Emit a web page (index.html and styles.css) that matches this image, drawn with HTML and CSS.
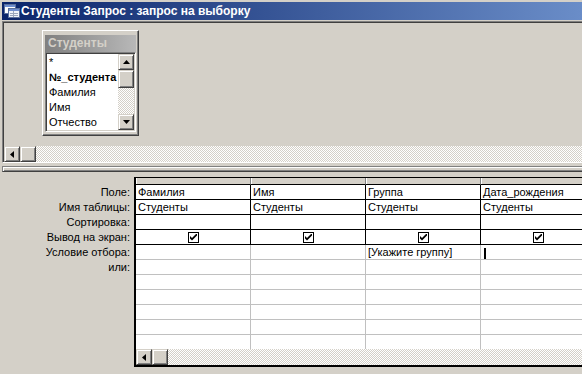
FILE: index.html
```html
<!DOCTYPE html>
<html lang="ru">
<head>
    <meta charset="UTF-8">
    <title>Студенты Запрос : запрос на выборку</title>
    <link rel="stylesheet" href="styles.css">
</head>
<body>
    <div class="window">
        <div class="titlebar">
            <svg class="title-icon" width="16" height="16" viewBox="0 0 16 16">
                <rect x="0.5" y="1.5" width="11" height="9" fill="#fff" stroke="#5a6f9c"/>
                <rect x="1" y="2" width="10" height="2" fill="#6f8fd0"/>
                <rect x="4.5" y="5.5" width="11" height="9" fill="#eef3fb" stroke="#5a6f9c"/>
                <rect x="5" y="6" width="10" height="2" fill="#6f8fd0"/>
                <path d="M6 10.5h8M6 12.5h8M9.5 8v6" stroke="#9aa6bd" stroke-width="1"/>
            </svg>
            <span class="title-text">Студенты Запрос : запрос на выборку</span>
        </div>

        <!-- upper pane: table field lists -->
        <div class="tables-pane">
            <div class="tables-area">
                <div class="field-list">
                    <div class="field-list-title">Студенты</div>
                    <div class="field-list-body">
                        <ul class="fields">
                            <li class="asterisk">*</li>
                            <li class="key">№_студента</li>
                            <li>Фамилия</li>
                            <li>Имя</li>
                            <li>Отчество</li>
                        </ul>
                        <div class="vscroll">
                            <div class="sb-btn">
                                <svg width="7" height="4" viewBox="0 0 7 4"><path d="M3.5 0L7 4H0z"/></svg>
                            </div>
                            <div class="sb-thumb"></div>
                            <div class="sb-track"></div>
                            <div class="sb-btn">
                                <svg width="7" height="4" viewBox="0 0 7 4"><path d="M0 0H7L3.5 4z"/></svg>
                            </div>
                        </div>
                    </div>
                </div>
            </div>
            <div class="hscroll">
                <div class="sb-btn">
                    <svg width="4" height="7" viewBox="0 0 4 7"><path d="M4 0V7L0 3.5z"/></svg>
                </div>
                <div class="sb-thumb"></div>
                <div class="sb-track"></div>
            </div>
        </div>

        <div class="splitter"></div>

        <!-- lower pane: design grid -->
        <div class="design-pane">
            <div class="row-labels">
                <div class="row-label">Поле:</div>
                <div class="row-label">Имя таблицы:</div>
                <div class="row-label">Сортировка:</div>
                <div class="row-label">Вывод на экран:</div>
                <div class="row-label">Условие отбора:</div>
                <div class="row-label">или:</div>
            </div>
            <div class="grid">
                <table class="qbe">
                    <tr class="selector">
                        <td></td><td></td><td></td><td></td>
                    </tr>
                    <tr class="strong">
                        <td>Фамилия</td><td>Имя</td><td>Группа</td><td>Дата_рождения</td>
                    </tr>
                    <tr class="strong">
                        <td>Студенты</td><td>Студенты</td><td>Студенты</td><td>Студенты</td>
                    </tr>
                    <tr class="strong">
                        <td></td><td></td><td></td><td></td>
                    </tr>
                    <tr class="strong">
                        <td class="center"><span class="check"><svg width="7" height="7" viewBox="0 0 7 7"><path d="M0 2L2 4L7 -1V1.5L2 6.5L0 4.5z"/></svg></span></td>
                        <td class="center"><span class="check"><svg width="7" height="7" viewBox="0 0 7 7"><path d="M0 2L2 4L7 -1V1.5L2 6.5L0 4.5z"/></svg></span></td>
                        <td class="center"><span class="check"><svg width="7" height="7" viewBox="0 0 7 7"><path d="M0 2L2 4L7 -1V1.5L2 6.5L0 4.5z"/></svg></span></td>
                        <td class="center"><span class="check"><svg width="7" height="7" viewBox="0 0 7 7"><path d="M0 2L2 4L7 -1V1.5L2 6.5L0 4.5z"/></svg></span></td>
                    </tr>
                    <tr>
                        <td></td><td></td><td>[Укажите группу]</td><td><span class="caret"></span></td>
                    </tr>
                    <tr><td></td><td></td><td></td><td></td></tr>
                    <tr><td></td><td></td><td></td><td></td></tr>
                    <tr><td></td><td></td><td></td><td></td></tr>
                    <tr><td></td><td></td><td></td><td></td></tr>
                    <tr><td></td><td></td><td></td><td></td></tr>
                    <tr class="last"><td></td><td></td><td></td><td></td></tr>
                </table>
                <div class="hscroll">
                    <div class="sb-btn">
                        <svg width="4" height="7" viewBox="0 0 4 7"><path d="M4 0V7L0 3.5z"/></svg>
                    </div>
                    <div class="sb-thumb"></div>
                    <div class="sb-track"></div>
                </div>
            </div>
        </div>
    </div>
</body>
</html>
```

FILE: styles.css
```css
body {
    margin: 0;
    background-color: #d4d0c8;
    font-family: "Liberation Sans", Arial, sans-serif;
    font-size: 11px;
    color: #000;
    overflow: hidden;
}
.window {
    width: 582px;
    height: 374px;
    padding: 2px 0 0 2px;
    box-sizing: border-box;
    overflow: hidden;
}

/* title bar */
.titlebar {
    display: flex;
    align-items: center;
    height: 18px;
    background: linear-gradient(to right, #0a246a, #6a8dc8);
    color: #fff;
}
.title-icon {
    margin: 0 1px 0 2px;
    flex-shrink: 0;
}
.title-text {
    font-weight: bold;
    font-size: 12px;
    white-space: nowrap;
}

/* upper pane */
.tables-pane {
    margin-top: 1px;
    border-top: 1px solid #808080;
    border-left: 1px solid #808080;
    border-bottom: 1px solid #fff;
    padding: 1px 0 0 1px;
    box-shadow: inset 1px 1px #404040;
}
.tables-area {
    height: 123px;
    overflow: hidden;
}
.field-list {
    width: 91px;
    margin: 7px 0 0 38px;
    padding: 4px 2px 3px 2px;
    border: 1px solid;
    border-color: #fff #404040 #404040 #fff;
    box-shadow: inset -1px -1px #808080;
}
.field-list-title {
    height: 17px;
    line-height: 17px;
    padding-left: 3px;
    background: linear-gradient(to right, #808080, #b8b8b8);
    color: #d4d0c8;
    font-weight: bold;
    font-size: 12px;
    white-space: nowrap;
    overflow: hidden;
}
.field-list-body {
    display: flex;
    height: 76px;
    padding: 1px;
    border: 1px solid;
    border-color: #808080 #fff #fff #808080;
    box-shadow: inset 1px 1px #404040, inset -1px -1px #d4d0c8;
    background-color: #fff;
}
.fields {
    list-style: none;
    margin: 0;
    padding: 1px 0 0 2px;
    width: 69px;
    overflow: hidden;
    white-space: nowrap;
}
.fields li {
    height: 15px;
    line-height: 15px;
}
.fields .key {
    font-weight: bold;
}
.vscroll {
    display: flex;
    flex-direction: column;
    width: 16px;
    flex-shrink: 0;
}
.vscroll .sb-thumb {
    height: 18px;
}

/* scrollbars */
.hscroll {
    display: flex;
    height: 16px;
}
.sb-btn,
.sb-thumb {
    width: 16px;
    height: 16px;
    box-sizing: border-box;
    flex-shrink: 0;
    background-color: #d4d0c8;
    border: 1px solid;
    border-color: #d4d0c8 #404040 #404040 #d4d0c8;
    box-shadow: inset 1px 1px #fff, inset -1px -1px #808080;
}
.sb-btn {
    display: flex;
    align-items: center;
    justify-content: center;
}
.sb-btn svg {
    display: block;
    fill: #000;
}
.sb-track {
    flex: 1;
    background-image: repeating-conic-gradient(#fff 0 25%, #d4d0c8 0 50%);
    background-size: 2px 2px;
}

/* splitter */
.splitter {
    margin-top: 3px;
    height: 4px;
    border-top: 1px solid #808080;
    border-bottom: 1px solid #404040;
    border-left: 1px solid #808080;
    box-shadow: inset 1px 1px #fff, inset 0 -1px #808080;
}

/* lower pane */
.design-pane {
    display: flex;
    margin-top: 5px;
}
.row-labels {
    width: 132px;
    flex-shrink: 0;
    padding-top: 8px;
}
.row-label {
    height: 15px;
    line-height: 14px;
    padding-right: 4px;
    text-align: right;
    white-space: nowrap;
}
.grid {
    flex: 1;
    overflow: hidden;
    border-top: 1px solid #000;
    border-left: 2px solid #000;
    border-bottom: 2px solid #000;
}
.qbe {
    border-collapse: separate;
    border-spacing: 0;
    table-layout: fixed;
    width: 460px;
    background-color: #fff;
}
.qbe td {
    width: 110px;
    height: 14px;
    padding: 0 2px;
    line-height: 14px;
    white-space: nowrap;
    overflow: hidden;
    border-right: 1px solid #c0c0c0;
    border-bottom: 1px solid #c0c0c0;
}
.qbe .strong td {
    border-color: #000;
}
.qbe .last td {
    border-bottom: none;
}
.qbe .selector td {
    height: 6px;
    padding: 0;
    line-height: 0;
    font-size: 0;
    background-color: #d4d0c8;
    border-right-color: #808080;
    border-bottom-color: #000;
    box-shadow: inset 1px 0 #fff;
}
.qbe td.center {
    text-align: center;
}
.check {
    display: inline-flex;
    align-items: center;
    justify-content: center;
    width: 11px;
    height: 11px;
    box-sizing: border-box;
    border: 1px solid #000;
    background-color: #fff;
    vertical-align: middle;
    margin-top: -1px;
}
.check svg {
    display: block;
    fill: #000;
}
.caret {
    display: inline-block;
    width: 2px;
    height: 11px;
    margin-left: 1px;
    background-color: #000;
    vertical-align: middle;
}
```
